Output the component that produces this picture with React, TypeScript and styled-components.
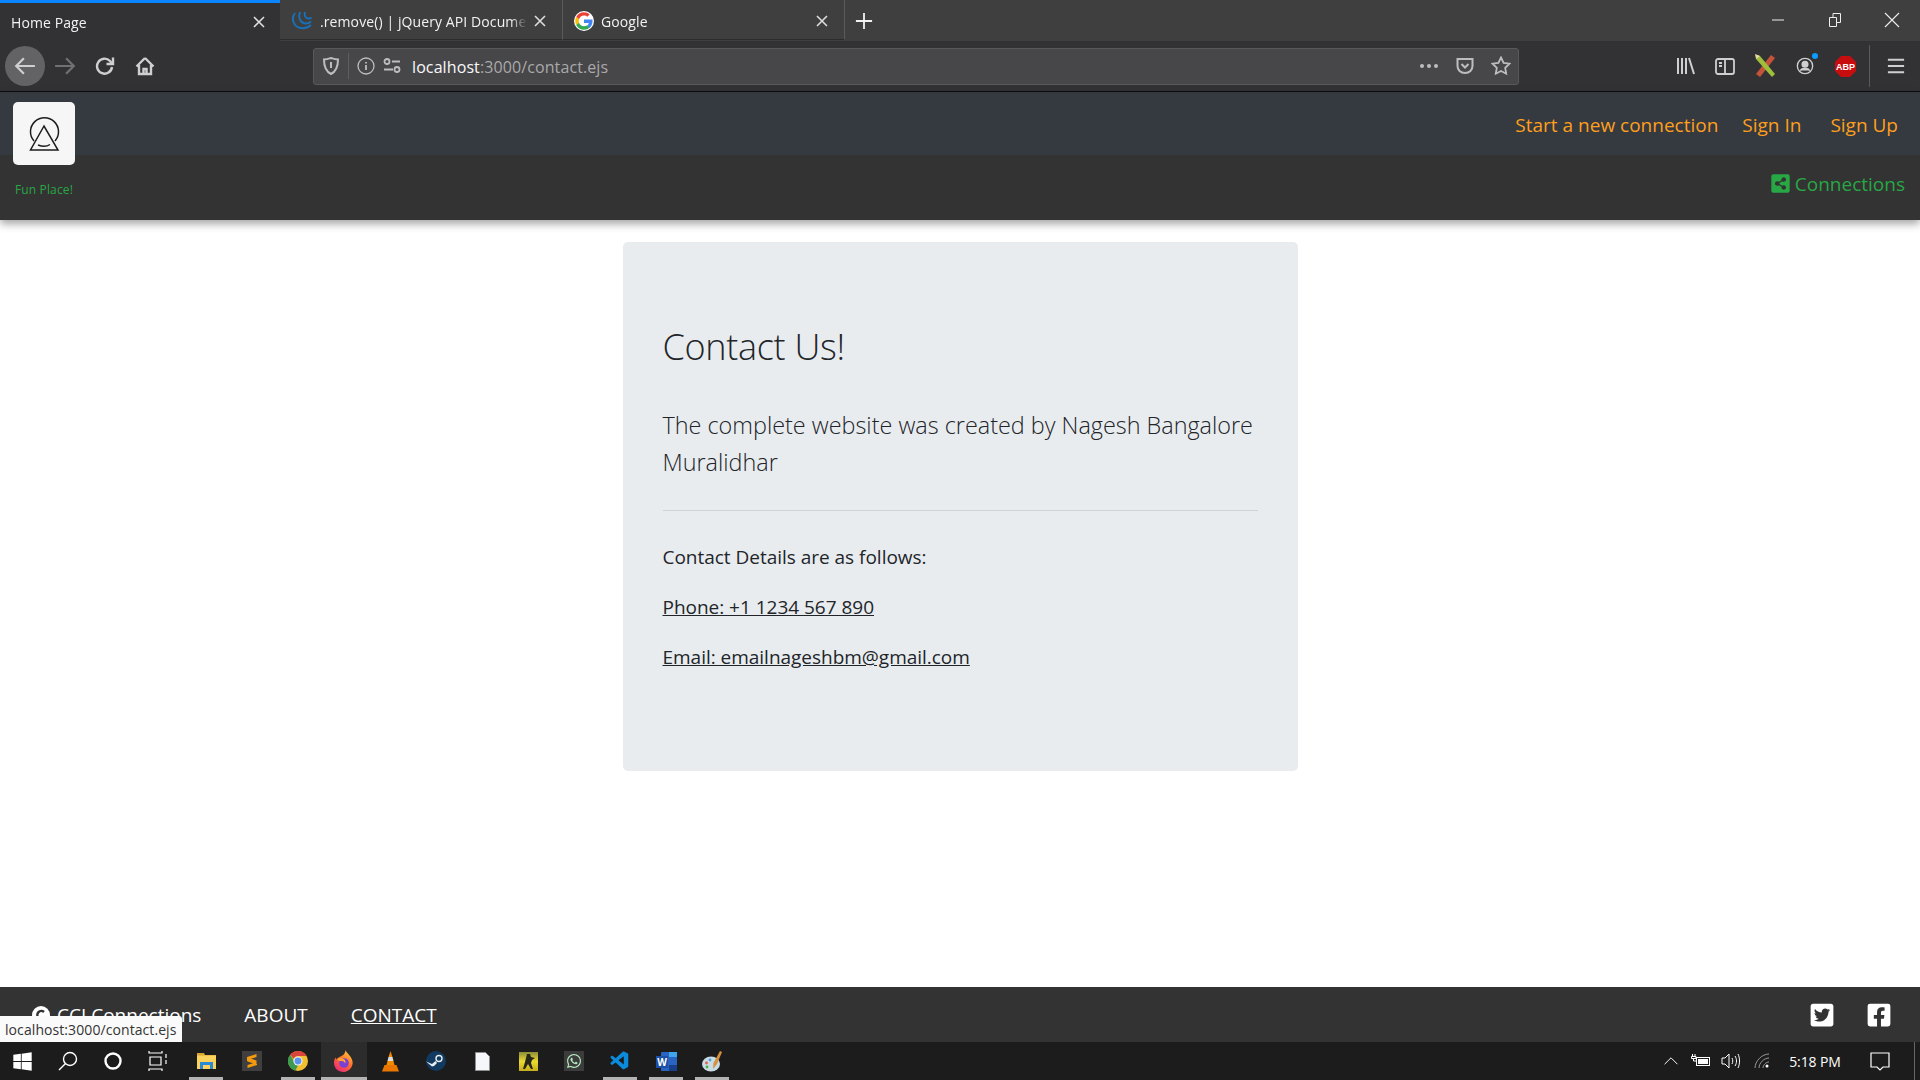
import React from 'react';
import styled, { createGlobalStyle } from 'styled-components';
import { FaFacebookSquare, FaShareAltSquare, FaTwitterSquare, FaWhatsapp, FaWindows } from 'react-icons/fa';
import { VscVscode } from 'react-icons/vsc';

const GlobalStyle = createGlobalStyle`
  html, body { margin: 0; padding: 0; background: #fff; }
  * { box-sizing: border-box; }
  body { font-family: "Open Sans", "Noto Sans", sans-serif; overflow: hidden; }
`;

const Screen = styled.div`
  position: relative;
  width: 1920px;
  height: 1080px;
  display: flex;
  flex-direction: column;
  overflow: hidden;
`;

/* ---------- browser chrome ---------- */

const TabStrip = styled.div`
  height: 41px;
  display: flex;
  background: #3f3f3f;
  color: #f2f2f2;
  font-size: 14px;
  letter-spacing: 0.1px;
`;

const Tab = styled.div<{ $active?: boolean; $width: number }>`
  width: ${p => p.$width}px;
  height: ${p => (p.$active ? 41 : 40)}px;
  display: flex;
  align-items: center;
  gap: 7px;
  padding: ${p => (p.$active ? '0 15px 0 11px' : '3px 16px 0 11px')};
  background: ${p => (p.$active ? '#323234' : 'transparent')};
  border-top: ${p => (p.$active ? '3px solid #0a84ff' : 'none')};
  border-right: ${p => (p.$active ? 'none' : '1px solid #5a5a5a')};
  border-bottom: ${p => (p.$active ? 'none' : '1px solid #2c2c2c')};
`;

const TabTitle = styled.span`
  flex: 1;
  white-space: nowrap;
  overflow: hidden;
  -webkit-mask-image: linear-gradient(to right, #000 92%, transparent);
  mask-image: linear-gradient(to right, #000 92%, transparent);
`;

const NewTab = styled.div`
  width: 38px;
  display: flex;
  align-items: center;
  justify-content: center;
`;

const WindowControls = styled.div`
  margin-left: auto;
  display: flex;
`;

const WindowButton = styled.div`
  width: 57px;
  height: 40px;
  display: flex;
  align-items: center;
  justify-content: center;
`;

const Toolbar = styled.div`
  height: 50px;
  display: flex;
  align-items: center;
  padding: 0 4px 0 5px;
  background: #323234;
  color: #cfcfcf;
`;

const NavButton = styled.div<{ $pressed?: boolean; $dim?: boolean }>`
  width: 40px;
  height: 40px;
  border-radius: 50%;
  display: flex;
  align-items: center;
  justify-content: center;
  background: ${p => (p.$pressed ? '#636365' : 'transparent')};
  opacity: ${p => (p.$dim ? 0.4 : 1)};
  & + & { margin-left: ${p => (p.$dim ? 1 : 0)}px; }
`;

const UrlBar = styled.div`
  width: 1206px;
  height: 37px;
  margin-left: 148px;
  display: flex;
  align-items: center;
  background: #474749;
  border: 1px solid #58585a;
  border-radius: 3px;
  color: #bdbdbd;
`;

const UrlSlot = styled.div<{ $width: number; $divider?: boolean }>`
  width: ${p => p.$width}px;
  height: 26px;
  flex: none;
  display: flex;
  align-items: center;
  justify-content: center;
  border-right: ${p => (p.$divider ? '1px solid #5f5f61' : 'none')};
`;

const UrlText = styled.div`
  flex: 1;
  padding: 2px 0 0 11px;
  font-size: 16px;
  letter-spacing: 0.1px;
  color: #a9a9ab;
  span { color: #f9f9fa; }
`;

const ToolIcons = styled.div`
  margin-left: 146px;
  display: flex;
  align-items: center;
  gap: 0;
`;

const ToolSlot = styled.div`
  width: 40px;
  height: 40px;
  display: flex;
  align-items: center;
  justify-content: center;
`;

const ToolDivider = styled.div`
  width: 1px;
  height: 42px;
  margin: 0 6px 0 4px;
  background: #5a5a5c;
`;

const Edge = styled.div`
  height: 1px;
  background: #0c0c0d;
`;

/* ---------- site header ---------- */

const Header = styled.header`
  position: relative;
  z-index: 1;
  background: #333;
  box-shadow: 0 4px 8px rgba(0, 0, 0, 0.35);
`;

const TopNav = styled.nav`
  height: 63px;
  display: flex;
  align-items: center;
  justify-content: flex-end;
  padding: 2px 22px 0 0;
  background: #343a40;
`;

const OrangeLink = styled.a<{ $gap?: number }>`
  margin-left: ${p => p.$gap ?? 0}px;
  font-size: 19px;
  color: #ff9f1c;
`;

const SubNav = styled.div`
  height: 65px;
  display: flex;
  align-items: center;
  justify-content: flex-end;
  padding: 0 15px 8px 0;
`;

const ConnectionsLink = styled.a`
  display: flex;
  align-items: center;
  gap: 4px;
  font-size: 19px;
  color: #28a745;
`;

const Brand = styled.div`
  position: absolute;
  top: 10px;
  left: 13px;
  width: 62px;
  display: flex;
  flex-direction: column;
  align-items: center;
`;

const LogoTile = styled.div`
  width: 62px;
  height: 63px;
  display: flex;
  align-items: center;
  justify-content: center;
  background: #f6f6f6;
  border-radius: 5px;
`;

const Tagline = styled.div`
  margin-top: 16px;
  font-size: 12px;
  letter-spacing: 0.15px;
  color: #28a745;
  white-space: nowrap;
`;

/* ---------- page ---------- */

const Main = styled.main`
  flex: 1;
  display: flex;
  justify-content: center;
  padding-top: 22px;
  background: #fff;
`;

const Card = styled.section`
  width: 675px;
  height: 529px;
  padding: 81px 40px 0;
  background: #e9ecef;
  border-radius: 5px;
  color: #212529;
`;

const Title = styled.h1`
  margin: 0 0 36px;
  font-size: 36px;
  line-height: 48px;
  font-weight: 300;
  letter-spacing: -0.3px;
`;

const Lead = styled.p`
  margin: 0;
  font-size: 23.4px;
  line-height: 37px;
  font-weight: 300;
`;

const Rule = styled.hr`
  margin: 29px 0 31px;
  border: 0;
  border-top: 1px solid #cfd2d5;
`;

const Line = styled.p`
  margin: 0 0 20px;
  font-size: 19px;
  line-height: 30px;
  letter-spacing: -0.02px;
  a { color: inherit; text-decoration: underline; }
`;

/* ---------- footer ---------- */

const Footer = styled.footer`
  height: 55px;
  display: flex;
  align-items: center;
  padding: 1px 28px 0 32px;
  background: #333;
  color: #fff;
`;

const FooterLink = styled.a<{ $current?: boolean; $gap: number }>`
  margin-right: ${p => p.$gap}px;
  display: flex;
  align-items: center;
  gap: 7px;
  font-size: 19px;
  color: #fff;
  text-decoration: ${p => (p.$current ? 'underline' : 'none')};
`;

const Socials = styled.div`
  margin-left: auto;
  display: flex;
  gap: 31px;
  font-size: 26px;
  line-height: 0;
`;

const StatusTip = styled.div`
  position: absolute;
  left: 0;
  top: 1016px;
  height: 26px;
  width: 182px;
  padding: 4px 0 0 5px;
  background: #fafafa;
  border-top-right-radius: 3px;
  font-size: 14px;
  letter-spacing: 0.08px;
  color: #333;
`;

/* ---------- taskbar ---------- */

const Taskbar = styled.div`
  height: 38px;
  display: flex;
  align-items: center;
  background: #1c1c1c;
  color: #fff;
`;

const SystemButtons = styled.div`
  display: flex;
  padding-right: 3px;
`;

const TaskSlot = styled.div<{ $open?: boolean; $active?: boolean; $narrow?: boolean }>`
  position: relative;
  width: ${p => (p.$narrow ? 45 : 46)}px;
  height: 38px;
  display: flex;
  align-items: center;
  justify-content: center;
  background: ${p => (p.$active ? '#2c2c2c' : 'transparent')};
  &::after {
    content: '';
    display: ${p => (p.$open || p.$active ? 'block' : 'none')};
    position: absolute;
    bottom: 0;
    left: ${p => (p.$active ? 0 : 6)}px;
    right: ${p => (p.$active ? 0 : 6)}px;
    height: 3px;
    background: #b3b3b3;
  }
`;

const AppTile = styled.div`
  width: 20px;
  height: 20px;
  display: flex;
  align-items: center;
  justify-content: center;
  background: #3c3c3c;
`;

const Tray = styled.div`
  margin-left: auto;
  display: flex;
  align-items: center;
  height: 100%;
`;

const TraySlot = styled.div<{ $width: number }>`
  width: ${p => p.$width}px;
  display: flex;
  align-items: center;
  justify-content: center;
`;

const Clock = styled.div`
  width: 76px;
  padding-right: 8px;
  text-align: center;
  font-size: 14px;
  letter-spacing: -0.1px;
`;

const ShowDesktop = styled.div`
  width: 1px;
  height: 100%;
  margin: 0 5px 0 11px;
  background: #666;
`;

const AccountDot = styled.i`
  position: absolute;
  top: -4px;
  right: -4px;
  width: 6px;
  height: 6px;
  border-radius: 50%;
  background: #0a9dff;
`;

const AccountBadge = styled.span`
  position: relative;
  display: flex;
`;

/* ---------- drawings ---------- */

const Stroke = ({ s = 20, children, w = 2, view = 20 }: { s?: number; children: React.ReactNode; w?: number; view?: number }) => (
  <svg width={s} height={s} viewBox={`0 0 ${view} ${view}`} fill="none" stroke="currentColor" strokeWidth={w}>
    {children}
  </svg>
);

const TabClose = () => (
  <svg width="12" height="12" viewBox="0 0 12 12" stroke="#dcdcdc" strokeWidth="1.6" style={{ flex: 'none' }}>
    <path d="M1 1l10 10M11 1L1 11" />
  </svg>
);

const JqueryIcon = () => (
  <svg width="22" height="20" viewBox="0 0 22 20" fill="none" stroke="#1a6fb5" strokeWidth="2" style={{ flex: 'none' }}>
    <path d="M4 2C0 7 2 16 10 17c4 .5 8-1 10-3" />
    <path d="M9 1C7 6 9 12 14 12.500c3 .2 5-1 6-2" />
    <path d="M14 1c-1 3 0 6 3 6.500 2 .2 3-.5 3.500-1" />
  </svg>
);

const GoogleIcon = () => (
  <svg width="20" height="20" viewBox="0 0 48 48" style={{ flex: 'none' }}>
    <circle cx="24" cy="24" r="24" fill="#fff" />
    <path fill="#ea4335" d="M24 11c3.400 0 6 1.300 7.900 3l5.700-5.700C34 5.100 29.500 3 24 3 15.800 3 8.800 7.700 5.400 14.500l6.700 5.200C13.700 14.600 18.400 11 24 11z" />
    <path fill="#4285f4" d="M44.500 24.500c0-1.500-.1-2.700-.4-4H24v8h11.500c-.5 2.700-2.300 5.500-5 7.200l6.500 5c3.900-3.500 7.500-9 7.500-16.200z" />
    <path fill="#fbbc05" d="M12.100 28.300C11.700 27 11.500 25.500 11.500 24s.2-3 .6-4.300l-6.700-5.200C4 17.300 3 20.500 3 24s1 6.700 2.400 9.500z" />
    <path fill="#34a853" d="M24 45c5.600 0 10.300-1.800 13-5.300l-6.500-5c-1.700 1.200-4 2-6.500 2-5.600 0-10.300-3.600-11.900-8.400l-6.700 5.200C8.800 40.300 15.800 45 24 45z" />
  </svg>
);

const ConnectLogo = () => (
  <svg width="32" height="36" viewBox="0 0 32 36" fill="none" stroke="#1d1d1d" strokeWidth="1.5">
    <path d="M6 25A14 14 0 1 1 27 25" />
    <path d="M16 10L2.500 34h27.500z" />
    <path d="M10 29c4 1.500 9 1.500 12-.500" />
  </svg>
);

const Chrome = () => (
  <svg width="20" height="20" viewBox="0 0 22 22">
    <circle cx="11" cy="11" r="11" fill="#f4bf2f" />
    <path d="M11 0a11 11 0 0 1 9.500 5.500H11a5.500 5.500 0 0 0-5 3L2.500 4A11 11 0 0 1 11 0z" fill="#d9453a" />
    <path d="M2.500 4L7 12a5 5 0 0 0 4 4l-3 5.700A11 11 0 0 1 2.500 4z" fill="#3e9a51" />
    <circle cx="11" cy="11" r="5" fill="#f2f2f2" />
    <circle cx="11" cy="11" r="3.800" fill="#5b93ee" />
  </svg>
);

const Firefox = () => (
  <svg width="20" height="22" viewBox="0 0 20 22">
    <defs>
      <linearGradient id="ff" x1="0.8" y1="0" x2="0.2" y2="1">
        <stop offset="0" stopColor="#ffd13b" />
        <stop offset="0.5" stopColor="#ff6a2c" />
        <stop offset="1" stopColor="#e8267f" />
      </linearGradient>
    </defs>
    <path d="M11.500 0c.5 2 2 3 4 5.500 3 3.500 4 7.500 2.500 10.500-1.500 3.500-5 6-8.500 6C4 22 0 18 0 13c0-2 .5-4 1.500-5.500l1 2c1-1.500 2.500-2.500 4-3 2.500-1 5-3 5-6.500z" fill="url(#ff)" />
    <circle cx="10" cy="13" r="4.800" fill="#7b3fd4" />
    <path d="M3 9c2-1.500 5-1.500 7 0 1.500 1 2 3 1 4.500-.5-2-2-2.500-4-2.500-1.500 0-3-.5-4-2z" fill="#ffa32b" />
  </svg>
);

const Vlc = () => (
  <svg width="17" height="21" viewBox="0 0 17 21">
    <path d="M8.500 0l2 6h-4z" fill="#f08a00" />
    <path d="M6.500 6h4l1 4h-6z" fill="#dcdcdc" />
    <path d="M5.500 10h6l1.300 5H4.200z" fill="#f08a00" />
    <path d="M2.500 14h12l2.500 6.500H0z" fill="#e87600" />
  </svg>
);

const Steam = () => (
  <svg width="20" height="20" viewBox="0 0 20 20">
    <circle cx="10" cy="10" r="10" fill="#123a60" />
    <circle cx="13" cy="7.500" r="3" fill="none" stroke="#e6edf2" strokeWidth="1.400" />
    <path d="M0 10.500l6 2.500 3.500-3 1.500 2-3 3-2 .5z" fill="#e6edf2" />
  </svg>
);

const Sublime = () => (
  <svg width="20" height="20" viewBox="0 0 20 20">
    <rect width="20" height="20" fill="#3f3f3f" />
    <path d="M14.500 3L5 6v4l9.500 3V9.500L9 7.800l5.500-1.700zM5.500 10.500L11 12.200 5.500 14v3l9.500-3v-1L5.500 10z" fill="#f59a0c" />
  </svg>
);

const Explorer = () => (
  <svg width="19" height="16" viewBox="0 0 19 16">
    <path d="M0 0h7l1 2h11v3H0z" fill="#d9a62f" />
    <rect y="2.500" width="19" height="13.500" fill="#fbd25c" />
    <path d="M3 9h13v7h-3v-4H6v4H3z" fill="#2b8ad6" />
  </svg>
);

const Word = () => (
  <svg width="21" height="19" viewBox="0 0 21 19">
    <rect x="5" width="16" height="19" rx="1" fill="#2a64c2" />
    <rect x="13" width="8" height="5" fill="#41a5ee" />
    <rect x="13" y="13" width="8" height="6" fill="#173f8a" />
    <rect y="4" width="12" height="12" fill="#1c4fa8" />
    <text x="6" y="13.500" textAnchor="middle" fontSize="10" fontWeight="700" fill="#fff" fontFamily="Open Sans, sans-serif">W</text>
  </svg>
);

const Paint = () => (
  <svg width="21" height="21" viewBox="0 0 21 21">
    <ellipse cx="9" cy="13" rx="9" ry="7.500" fill="#c9dbe3" />
    <circle cx="4.500" cy="12" r="1.400" fill="#e25d4f" />
    <circle cx="8" cy="9" r="1.400" fill="#4aa3df" />
    <circle cx="5" cy="16" r="1.400" fill="#4caf50" />
    <path d="M18 0l2 1-5 12-4 5 .5-6z" fill="#d6913f" />
  </svg>
);

const PageFile = () => (
  <svg width="15" height="19" viewBox="0 0 15 19">
    <path d="M.5.500h10l4 4v14H.5z" fill="#f5f7fb" stroke="#8f8f8f" />
  </svg>
);

const CsTile = () => (
  <svg width="19" height="19" viewBox="0 0 19 19">
    <defs>
      <linearGradient id="cs" x1="0" y1="0" x2="0" y2="1">
        <stop offset="0" stopColor="#8d8d3a" />
        <stop offset="0.5" stopColor="#ecd92f" />
        <stop offset="1" stopColor="#c4ad1c" />
      </linearGradient>
    </defs>
    <rect width="19" height="19" fill="url(#cs)" />
    <path d="M8 2h3l1 3 4 1-3 2-1 3 2 6h-2l-3-5-3 5H4l2-7 1-4z" fill="#26261a" />
  </svg>
);

const ScrewPencil = () => (
  <svg width="22" height="24" viewBox="0 0 22 24">
    <path d="M17 1l4 3L6 23l-4-3z" fill="#c4533a" />
    <path d="M3 1l3 1 15 18-3 3L2 5z" fill="#9fbf3c" />
    <path d="M1 0l5 2-4 3z" fill="#e9d9a8" />
  </svg>
);

export default function App() {
  return (
    <Screen>
      <GlobalStyle />

      <TabStrip>
        <Tab $active $width={280}>
          <TabTitle>Home Page</TabTitle>
          <TabClose />
        </Tab>
        <Tab $width={283}>
          <JqueryIcon />
          <TabTitle>.remove() | jQuery API Documentation</TabTitle>
          <TabClose />
        </Tab>
        <Tab $width={282}>
          <GoogleIcon />
          <TabTitle>Google</TabTitle>
          <TabClose />
        </Tab>
        <NewTab>
          <Stroke s={18} w={2}><path d="M10 1v18M1 10h18" /></Stroke>
        </NewTab>
        <WindowControls>
          <WindowButton>
            <svg width="12" height="2" stroke="#eee"><path d="M0 1h12" /></svg>
          </WindowButton>
          <WindowButton>
            <svg width="12" height="14" viewBox="0 0 12 14" fill="none" stroke="#eee"><path d="M.5 4.500h7v9h-7zM4 4.500v-4h7.500v9H7.500" /></svg>
          </WindowButton>
          <WindowButton>
            <svg width="16" height="16" stroke="#eee" strokeWidth="1.100"><path d="M1 1l14 14M15 1L1 15" /></svg>
          </WindowButton>
        </WindowControls>
      </TabStrip>

      <Toolbar>
        <NavButton $pressed>
          <Stroke s={22}><path d="M19 10H2M9 3l-7 7 7 7" /></Stroke>
        </NavButton>
        <NavButton $dim>
          <Stroke s={22}><path d="M1 10h17M11 3l7 7-7 7" /></Stroke>
        </NavButton>
        <NavButton>
          <Stroke s={20} w={2.400}><path d="M17 11a7.500 7.500 0 1 1-2-6l2 2.500" /><path d="M18 1.500V8h-6.500" /></Stroke>
        </NavButton>
        <NavButton>
          <Stroke s={20} w={2.400}><path d="M10 2L1.500 10.500M10 2l8.500 8.500M4 9v9h12V9M8.500 18v-5h3v5" /></Stroke>
        </NavButton>

        <UrlBar>
          <UrlSlot $width={35} $divider>
            <svg width="16" height="18" viewBox="0 0 16 18" fill="none" stroke="currentColor" strokeWidth="2">
              <path d="M1 2.500C5 2 6 1.500 8 1c2 .5 3 1 7 1.500 0 7-2 12-7 14.500C3 14.500 1 9.500 1 2.500z" />
              <path d="M8 5v6" />
            </svg>
          </UrlSlot>
          <UrlSlot $width={34}>
            <svg width="18" height="18" viewBox="0 0 18 18" fill="none" stroke="currentColor" strokeWidth="1.300">
              <circle cx="9" cy="9" r="8" />
              <path d="M9 8v5M9 5v1.500" strokeWidth="1.800" />
            </svg>
          </UrlSlot>
          <UrlSlot $width={18}>
            <svg width="18" height="16" viewBox="0 0 18 16" fill="none" stroke="currentColor" strokeWidth="1.800">
              <circle cx="4" cy="3.500" r="2.500" />
              <path d="M9 3.500h8M1 11.500h9" />
              <circle cx="14" cy="11.500" r="2.500" />
            </svg>
          </UrlSlot>
          <UrlText><span>localhost</span>:3000/contact.ejs</UrlText>
          <UrlSlot $width={36}>
            <svg width="20" height="4" fill="currentColor">
              <circle cx="3" cy="2" r="2" /><circle cx="10" cy="2" r="2" /><circle cx="17" cy="2" r="2" />
            </svg>
          </UrlSlot>
          <UrlSlot $width={36}>
            <svg width="18" height="18" viewBox="0 0 18 18" fill="none" stroke="currentColor" strokeWidth="2">
              <path d="M1.500 2h15v7c0 4-3 7-7.500 7S1.500 13 1.500 9z" />
              <path d="M5.500 7L9 10.500 12.500 7" />
            </svg>
          </UrlSlot>
          <UrlSlot $width={35}>
            <svg width="20" height="20" viewBox="0 0 20 20" fill="none" stroke="currentColor" strokeWidth="1.800">
              <path d="M10 1.500l2.600 5.400 5.900.8-4.300 4.100 1 5.900-5.200-2.800-5.200 2.800 1-5.900L1.500 7.700l5.900-.8z" />
            </svg>
          </UrlSlot>
        </UrlBar>

        <ToolIcons>
          <ToolSlot>
            <Stroke s={20} w={2}><path d="M3 2v16M7 2v16M11 2v16M14 2l5 16" /></Stroke>
          </ToolSlot>
          <ToolSlot>
            <Stroke s={20} w={1.800}><rect x="1" y="3" width="18" height="15" rx="2" /><path d="M10 3v15M4 7h3M4 10h3" /></Stroke>
          </ToolSlot>
          <ToolSlot><ScrewPencil /></ToolSlot>
          <ToolSlot>
            <AccountBadge>
              <Stroke s={18} w={1.500}>
                <circle cx="10" cy="10" r="8.500" />
                <circle cx="10" cy="8" r="3.200" fill="currentColor" />
                <path d="M4.500 15c2-3 9-3 11 0" fill="currentColor" />
              </Stroke>
              <AccountDot />
            </AccountBadge>
          </ToolSlot>
          <ToolSlot>
            <svg width="21" height="21" viewBox="0 0 21 21">
              <path d="M6 0h9l6 6v9l-6 6H6l-6-6V6z" fill="#c70d0d" />
              <text x="10.500" y="14" textAnchor="middle" fontSize="9" fontWeight="700" fill="#fff" fontFamily="Liberation Sans, sans-serif">ABP</text>
            </svg>
          </ToolSlot>
          <ToolDivider />
          <ToolSlot>
            <Stroke s={18} w={2.200}><path d="M1 3h18M1 10h18M1 17h18" /></Stroke>
          </ToolSlot>
        </ToolIcons>
      </Toolbar>
      <Edge />

      <Header>
        <TopNav>
          <OrangeLink>Start a new connection</OrangeLink>
          <OrangeLink $gap={24}>Sign In</OrangeLink>
          <OrangeLink $gap={29}>Sign Up</OrangeLink>
        </TopNav>
        <SubNav>
          <ConnectionsLink><FaShareAltSquare size={21} />Connections</ConnectionsLink>
        </SubNav>
        <Brand>
          <LogoTile><ConnectLogo /></LogoTile>
          <Tagline>Fun Place!</Tagline>
        </Brand>
      </Header>

      <Main>
        <Card>
          <Title>Contact Us!</Title>
          <Lead>The complete website was created by Nagesh Bangalore Muralidhar</Lead>
          <Rule />
          <Line>Contact Details are as follows:</Line>
          <Line><a>Phone: +1 1234 567 890</a></Line>
          <Line><a>Email: emailnageshbm@gmail.com</a></Line>
        </Card>
      </Main>

      <Footer>
        <FooterLink $gap={43}>
          <svg width="18" height="18" viewBox="0 0 18 18"><circle cx="9" cy="9" r="9" fill="#fff" /><path d="M12 6a4 4 0 1 0 0 6" fill="none" stroke="#333" strokeWidth="2.500" /></svg>
          CCI Connections
        </FooterLink>
        <FooterLink $gap={43}>ABOUT</FooterLink>
        <FooterLink $current $gap={0}>CONTACT</FooterLink>
        <Socials>
          <FaTwitterSquare />
          <FaFacebookSquare />
        </Socials>
      </Footer>
      <StatusTip>localhost:3000/contact.ejs</StatusTip>

      <Taskbar>
        <SystemButtons>
          <TaskSlot $narrow><FaWindows size={21} /></TaskSlot>
          <TaskSlot $narrow>
            <Stroke s={20} w={1.400}><circle cx="12" cy="8" r="6.500" /><path d="M7.500 12.500L1 19" /></Stroke>
          </TaskSlot>
          <TaskSlot $narrow>
            <Stroke s={20} w={2.400}><circle cx="10" cy="10" r="7.500" /></Stroke>
          </TaskSlot>
          <TaskSlot $narrow>
            <Stroke s={20} w={1.200}><path d="M1 0v2h13V0M2 6h11v8H2zM1 20v-2h13v2M18 3v4M18 9v4" /></Stroke>
          </TaskSlot>
        </SystemButtons>
        <TaskSlot $open><Explorer /></TaskSlot>
        <TaskSlot><Sublime /></TaskSlot>
        <TaskSlot $open><Chrome /></TaskSlot>
        <TaskSlot $active><Firefox /></TaskSlot>
        <TaskSlot><Vlc /></TaskSlot>
        <TaskSlot><Steam /></TaskSlot>
        <TaskSlot><PageFile /></TaskSlot>
        <TaskSlot><CsTile /></TaskSlot>
        <TaskSlot><AppTile><FaWhatsapp size={16} color="#b5e8bd" /></AppTile></TaskSlot>
        <TaskSlot $open><VscVscode size={22} color="#0a8bdc" /></TaskSlot>
        <TaskSlot $open><Word /></TaskSlot>
        <TaskSlot $open><Paint /></TaskSlot>

        <Tray>
          <TraySlot $width={28}>
            <Stroke s={16} w={1.200}><path d="M2 14l8-8 8 8" /></Stroke>
          </TraySlot>
          <TraySlot $width={32}>
            <svg width="20" height="14" viewBox="0 0 20 14" fill="none" stroke="#fff">
              <rect x="5.500" y="3.500" width="13" height="8" />
              <rect x="7" y="5" width="10" height="5" fill="#fff" stroke="none" />
              <path d="M1.500 0v2M4 0v2M.5 2.500h4.500v2h-4.500zM2.500 4.500v2.500h3" />
            </svg>
          </TraySlot>
          <TraySlot $width={26}>
            <Stroke s={20} w={1}><path d="M2 7h3l4-4v14l-4-4H2zM12 7c1 2 1 4 0 6M15 5c2 3 2 7 0 10M18 3c2 4 2 10 0 14" /></Stroke>
          </TraySlot>
          <TraySlot $width={38}>
            <svg width="16" height="16" viewBox="0 0 16 16" fill="none" stroke="#999">
              <path d="M1 15C1 8 8 1 15 1M5 15c0-5 5-10 10-10M9 15c0-3 3-6 6-6" />
              <circle cx="13" cy="13" r="1.500" fill="#fff" stroke="none" />
            </svg>
          </TraySlot>
          <Clock>5:18 PM</Clock>
          <TraySlot $width={46}>
            <Stroke s={20} w={1.200}><path d="M1 2h18v14h-6l-3 3-3-3H1z" /></Stroke>
          </TraySlot>
          <ShowDesktop />
        </Tray>
      </Taskbar>
    </Screen>
  );
}
